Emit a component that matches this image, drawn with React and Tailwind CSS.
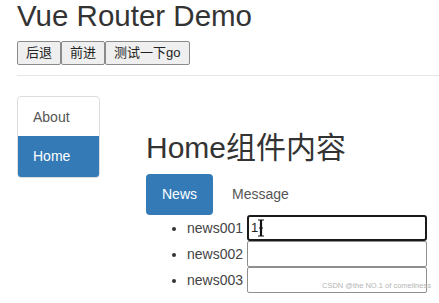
import { useState } from "react";

function App() {
  const [active] = useState("news");

  const news = ["news001", "news002", "news003"];

  return (
    <div className="relative min-h-screen bg-white font-['Liberation_Sans','Noto_Sans_CJK_SC',sans-serif] text-sm text-[#333]">
      <div className="pl-[17px]">
        {/* Header */}
        <h2 className="text-[29.5px] leading-[32px] font-normal">Vue Router Demo</h2>

        <div className="mt-[9px] flex">
          <button className="h-[24px] rounded-[2px] border border-[#8a8a8a] bg-[#efefef] px-[8px] text-[13px] leading-[20px] text-[#222]">
            后退
          </button>
          <button className="h-[24px] rounded-[2px] border border-[#8a8a8a] bg-[#efefef] px-[8px] text-[13px] leading-[20px] text-[#222]">
            前进
          </button>
          <button className="h-[24px] rounded-[2px] border border-[#8a8a8a] bg-[#efefef] px-[8px] text-[13px] leading-[20px] text-[#222]">
            测试一下go
          </button>
        </div>

        <hr className="mt-[10px] border-0 border-t border-[#e6e6e6]" />

        <div className="mt-[20px] flex">
          {/* Sidebar */}
          <div className="w-[83px] self-start overflow-hidden rounded-[4px] border border-[#ddd]">
            <div className="h-[39px] px-[15px] py-[10px] leading-[20px] text-[#555]">About</div>
            <div className="h-[41px] bg-[#337ab7] px-[15px] py-[10px] leading-[20px] text-white">Home</div>
          </div>

          {/* Content */}
          <div className="ml-[46px] pt-[36px]">
            <h3 className="text-[30px] leading-[32px] font-normal">Home组件内容</h3>

            <div className="mt-[10px] flex">
              <div
                className={
                  active === "news"
                    ? "h-[41px] rounded-[4px] bg-[#337ab7] px-[16px] py-[10px] leading-[21px] text-white"
                    : "h-[41px] px-[16px] py-[10px] leading-[21px]"
                }
              >
                News
              </div>
              <div className="ml-[2px] h-[41px] px-[17px] py-[10px] leading-[21px] text-[#555]">Message</div>
            </div>

            <ul className="list-disc pl-[41px]">
              {news.map((n, i) => (
                <li key={n} className="h-[26px] leading-[26px] text-[#444] marker:text-[#333]">
                  {n}{" "}
                  {i === 0 ? (
                    <span className="relative inline-block h-[26px] w-[180px] rounded-[3px] border-2 border-[#1a1a1a] align-top">
                      <span className="absolute left-[2px] top-[3px] text-[13px] leading-[16px] text-[#222]">1</span>
                      <svg className="absolute left-[9px] top-[2px]" width="6" height="18" viewBox="0 0 6 18">
                        <path d="M0 1h2.5v16H0M6 1H3.5v16H6M1 9h4" fill="none" stroke="#111" strokeWidth="1.2" />
                      </svg>
                    </span>
                  ) : (
                    <input
                      readOnly
                      className="inline-block h-[26px] w-[180px] rounded-[2px] border border-[#8f8f8f] bg-white align-top outline-none"
                    />
                  )}
                </li>
              ))}
            </ul>
          </div>
        </div>
      </div>

      {/* Watermark */}
      <div className="absolute left-[322px] top-[281px] whitespace-nowrap text-[7.5px] leading-[10px] text-[#b5b5b5]">
        CSDN @the NO.1 of comeliness
      </div>
    </div>
  );
}

export default App;
